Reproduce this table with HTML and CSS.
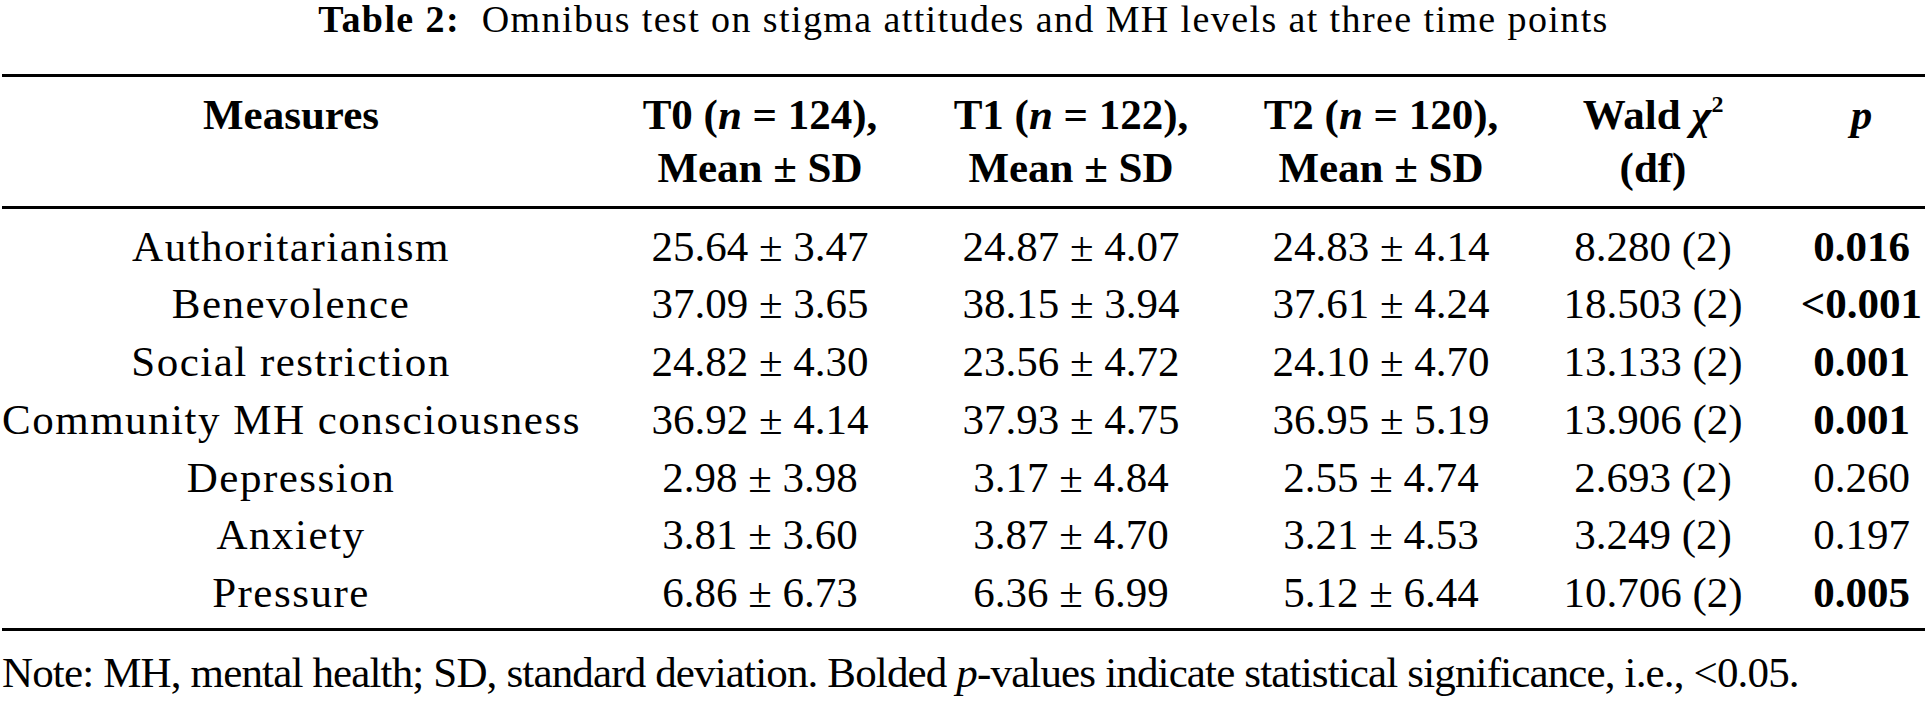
FILE: index.html
```html
<!DOCTYPE html>
<html lang="en">
<head>
<meta charset="utf-8">
<title>Table 2</title>
<link rel="stylesheet" href="styles.css">
</head>
<body>
<div class="page">
  <p class="caption"><b>Table 2:</b>&nbsp; Omnibus test on stigma attitudes and MH levels at three time points</p>
  <table class="tbl">
    <colgroup>
      <col class="c1"><col class="c2"><col class="c3"><col class="c4"><col class="c5"><col class="c6">
    </colgroup>
    <thead>
      <tr>
        <th>Measures</th>
        <th>T0 (<i>n</i> = 124),<br>Mean ± SD</th>
        <th>T1 (<i>n</i> = 122),<br>Mean ± SD</th>
        <th>T2 (<i>n</i> = 120),<br>Mean ± SD</th>
        <th>Wald <i>χ</i><sup>2</sup><br>(df)</th>
        <th class="pc"><i>p</i></th>
      </tr>
    </thead>
    <tbody>
      <tr><td class="lbl">Authoritarianism</td><td>25.64 ± 3.47</td><td>24.87 ± 4.07</td><td>24.83 ± 4.14</td><td>8.280 (2)</td><td class="pc"><b>0.016</b></td></tr>
      <tr><td class="lbl">Benevolence</td><td>37.09 ± 3.65</td><td>38.15 ± 3.94</td><td>37.61 ± 4.24</td><td>18.503 (2)</td><td class="pc"><b>&lt;0.001</b></td></tr>
      <tr><td class="lbl">Social restriction</td><td>24.82 ± 4.30</td><td>23.56 ± 4.72</td><td>24.10 ± 4.70</td><td>13.133 (2)</td><td class="pc"><b>0.001</b></td></tr>
      <tr><td class="lbl">Community MH consciousness</td><td>36.92 ± 4.14</td><td>37.93 ± 4.75</td><td>36.95 ± 5.19</td><td>13.906 (2)</td><td class="pc"><b>0.001</b></td></tr>
      <tr><td class="lbl">Depression</td><td>2.98 ± 3.98</td><td>3.17 ± 4.84</td><td>2.55 ± 4.74</td><td>2.693 (2)</td><td class="pc">0.260</td></tr>
      <tr><td class="lbl">Anxiety</td><td>3.81 ± 3.60</td><td>3.87 ± 4.70</td><td>3.21 ± 4.53</td><td>3.249 (2)</td><td class="pc">0.197</td></tr>
      <tr><td class="lbl">Pressure</td><td>6.86 ± 6.73</td><td>6.36 ± 6.99</td><td>5.12 ± 6.44</td><td>10.706 (2)</td><td class="pc"><b>0.005</b></td></tr>
    </tbody>
  </table>
  <p class="note">Note: MH, mental health; SD, standard deviation. Bolded <i>p</i>-values indicate statistical significance, i.e., &lt;0.05.</p>
</div>
</body>
</html>
```
FILE: styles.css
```css
html, body {
  margin: 0;
  padding: 0;
  background: #ffffff;
}

body {
  font-family: "Liberation Serif", "Times New Roman", serif;
  color: #000000;
}

.page {
  width: 1923px;
  padding-left: 2px;
}

.caption {
  margin: 0 0 36px 0;
  font-size: 38px;
  line-height: 38px;
  letter-spacing: 1.4px;
  text-align: center;
}

.tbl {
  width: 1923px;
  table-layout: fixed;
  border-collapse: separate;
  border-spacing: 0;
  border-top: 3px solid #000;
  border-bottom: 3px solid #000;
  font-size: 43px;
}

.c1 { width: 578px; }
.c2 { width: 360px; }
.c3 { width: 262px; }
.c4 { width: 358px; }
.c5 { width: 186px; }
.c6 { width: 179px; }

.tbl th,
.tbl td {
  padding: 0;
  text-align: center;
  white-space: nowrap;
}

.tbl th {
  font-weight: bold;
  line-height: 53px;
  vertical-align: top;
  padding-top: 11px;
  padding-bottom: 12px;
  border-bottom: 3px solid #000;
}

.tbl th sup {
  font-size: 24px;
  line-height: 0;
  position: relative;
  top: -2px;
}

.tbl td {
  line-height: 57.75px;
}

.tbl tbody tr:first-child td {
  padding-top: 8.6px;
}

.tbl tbody tr:last-child td {
  padding-bottom: 6px;
}

.tbl .pc {
  padding-left: 52px;
}

.tbl .lbl {
  letter-spacing: 1.5px;
}

.note {
  margin: 13.6px 0 0 0;
  font-size: 43px;
  line-height: 57.75px;
  letter-spacing: -0.85px;
  white-space: nowrap;
}
```
